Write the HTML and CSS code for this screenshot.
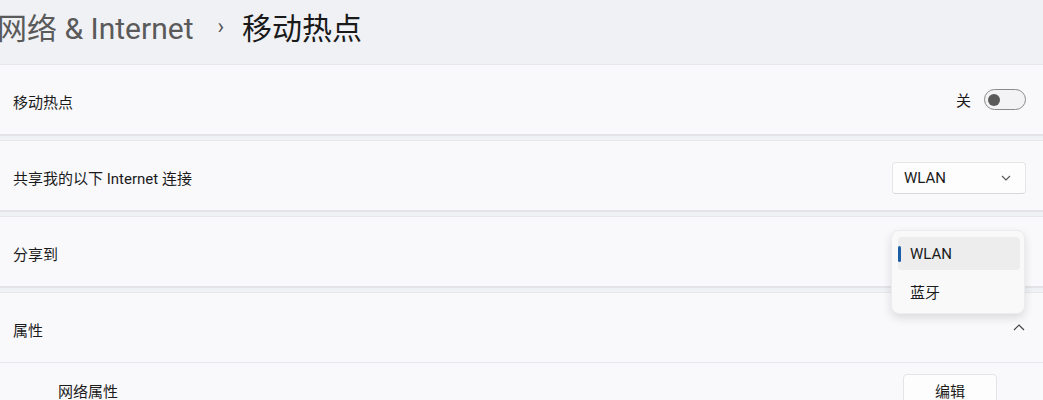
FILE: index.html
```html
<!DOCTYPE html>
<html lang="zh-CN">
<head>
    <meta charset="UTF-8">
    <meta name="viewport" content="width=device-width, initial-scale=1.0">
    <title>移动热点</title>
    <link rel="stylesheet" href="styles.css">
</head>
<body>
    <div class="page">
        <h1 class="crumbs">
            <span class="crumb-parent">网络 &amp; Internet</span>
            <span class="crumb-sep">›</span>
            <span class="crumb-current">移动热点</span>
        </h1>

        <div class="card">
            <span class="label">移动热点</span>
            <div class="toggle-wrap">
                <span class="toggle-state">关</span>
                <span class="toggle"><span class="knob"></span></span>
            </div>
        </div>

        <div class="card">
            <span class="label">共享我的以下 Internet 连接</span>
            <div class="select">
                <span>WLAN</span>
                <svg class="chev" width="10" height="6" viewBox="0 0 10 6"><path d="M1 1l4 4 4-4" fill="none" stroke="#555" stroke-width="1.1"/></svg>
            </div>
        </div>

        <div class="card">
            <span class="label">分享到</span>
        </div>

        <div class="card group">
            <div class="group-head">
                <span class="label">属性</span>
                <svg class="chev-up" width="12" height="7" viewBox="0 0 12 7"><path d="M1 6l5-5 5 5" fill="none" stroke="#444" stroke-width="1.2"/></svg>
            </div>
            <div class="group-row">
                <span class="label">网络属性</span>
                <button class="btn">编辑</button>
            </div>
        </div>

        <div class="menu">
            <div class="menu-item selected"><span class="bar"></span>WLAN</div>
            <div class="menu-item">蓝牙</div>
        </div>
    </div>
</body>
</html>
```

FILE: styles.css
```css
body {
    margin: 0;
    background-color: #f0f1f5;
    font-family: Roboto, "Noto Sans CJK SC", sans-serif;
    color: #1b1b1b;
    overflow: hidden;
}

.page {
    position: relative;
    display: flex;
    flex-direction: column;
    gap: 4px;
}

.crumbs {
    margin: 0 0 0 -3px;
    height: 60px;
    display: flex;
    align-items: center;
    gap: 15px;
    font-size: 30px;
    font-weight: 400;
    padding-bottom: 8px;
    box-sizing: border-box;
}

.crumb-parent {
    color: #5a5a5a;
    margin-right: 2px;
}

.crumb-sep {
    color: #555;
    font-size: 22px;
    margin: 0 3px 0 7px;
}

.crumb-current {
    color: #1a1a1a;
}

.card {
    background-color: #f9f9fb;
    border-top: 1px solid #e8e8ec;
    border-bottom: 2px solid #e4e4e8;
    height: 69px;
    padding: 0 17px 0 13px;
    display: flex;
    align-items: center;
    justify-content: space-between;
    font-size: 15px;
}

.label {
    padding-top: 4px;
}

.toggle-wrap {
    display: flex;
    align-items: center;
    gap: 13px;
}

.toggle {
    width: 37px;
    height: 19px;
    border: 1px solid #8a8a8a;
    border-radius: 11px;
    background-color: #f3f3f5;
    display: flex;
    align-items: center;
    padding-left: 3px;
}

.knob {
    width: 12px;
    height: 12px;
    border-radius: 50%;
    background-color: #5a5a5a;
}

.select {
    width: 134px;
    height: 32px;
    box-sizing: border-box;
    border: 1px solid #e6e6e6;
    border-bottom-color: #d8d8d8;
    border-radius: 4px;
    background-color: #fdfdfd;
    display: flex;
    align-items: center;
    justify-content: space-between;
    padding: 0 14px 0 11px;
    margin-top: 4px;
}

.group {
    height: auto;
    flex-direction: column;
    align-items: stretch;
    padding: 0;
    border-bottom: none;
}

.group-head {
    height: 69px;
    display: flex;
    align-items: center;
    justify-content: space-between;
    padding: 0 18px 0 13px;
    border-bottom: 1px solid #e8e8ec;
}

.group-row {
    height: 70px;
    display: flex;
    align-items: center;
    justify-content: space-between;
    padding: 0 46px 0 58px;
}

.group-row .label {
    padding-top: 0;
    margin-top: -16px;
}

.btn {
    width: 94px;
    height: 32px;
    margin-top: -16px;
    border: 1px solid #e4e4e4;
    border-radius: 4px;
    background-color: #fdfdfd;
    font-family: Roboto, "Noto Sans CJK SC", sans-serif;
    font-size: 15px;
    color: #1b1b1b;
}

.menu {
    position: absolute;
    left: 891px;
    top: 230px;
    width: 134px;
    box-sizing: border-box;
    padding: 6px 4px 5px 6px;
    background-color: #f9f9f9;
    border: 1px solid #ececec;
    border-radius: 8px;
    box-shadow: 0 4px 10px rgba(0, 0, 0, 0.12);
    font-size: 15px;
    display: flex;
    flex-direction: column;
    gap: 5px;
}

.menu-item {
    position: relative;
    height: 33px;
    display: flex;
    align-items: center;
    padding-left: 12px;
    border-radius: 4px;
}

.menu-item.selected {
    background-color: #ededee;
}

.bar {
    position: absolute;
    left: 0;
    top: 9px;
    width: 3px;
    height: 16px;
    border-radius: 2px;
    background-color: #1a5fa6;
}
```
